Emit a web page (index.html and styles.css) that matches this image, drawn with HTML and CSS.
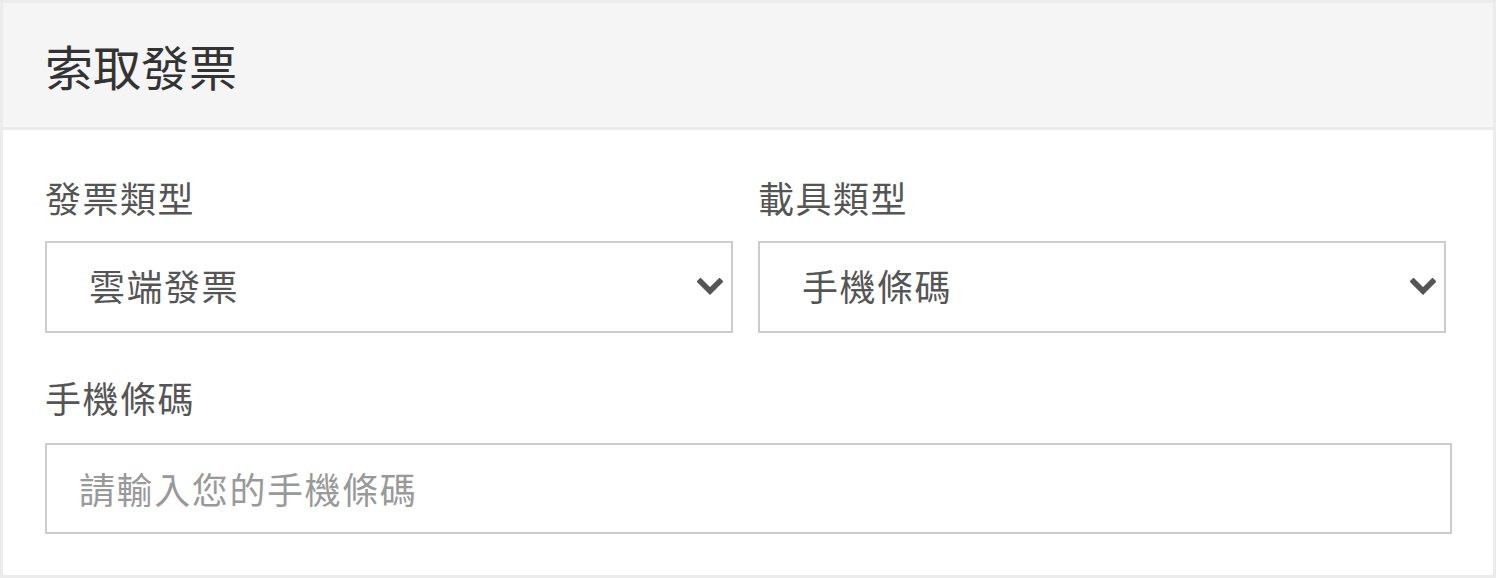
FILE: index.html
```html
<!DOCTYPE html>
<html lang="zh-TW">
<head>
    <meta charset="UTF-8">
    <meta name="viewport" content="width=device-width, initial-scale=1.0">
    <title>索取發票</title>
    <link rel="stylesheet" href="styles.css">
</head>
<body>
    <div class="panel">
        <div class="panel-heading">索取發票</div>

        <div class="panel-body">
            <div class="form-row">
                <div class="form-group">
                    <label class="form-label" for="invoice-type">發票類型</label>
                    <div class="select-wrap">
                        <select id="invoice-type" class="form-select">
                            <option>雲端發票</option>
                            <option>捐贈發票</option>
                            <option>三聯式發票</option>
                        </select>
                        <svg class="select-arrow" width="26" height="18" viewBox="0 0 26 18">
                            <polyline points="3.5,3.5 13,13 22.5,3.5" fill="none" stroke="#555" stroke-width="5.5" stroke-linecap="square" stroke-linejoin="miter"/>
                        </svg>
                    </div>
                </div>
                <div class="form-group">
                    <label class="form-label" for="carrier-type">載具類型</label>
                    <div class="select-wrap">
                        <select id="carrier-type" class="form-select">
                            <option>手機條碼</option>
                            <option>自然人憑證</option>
                        </select>
                        <svg class="select-arrow" width="26" height="18" viewBox="0 0 26 18">
                            <polyline points="3.5,3.5 13,13 22.5,3.5" fill="none" stroke="#555" stroke-width="5.5" stroke-linecap="square" stroke-linejoin="miter"/>
                        </svg>
                    </div>
                </div>
            </div>

            <div class="form-group form-group-last">
                <label class="form-label" for="mobile-code">手機條碼</label>
                <input type="text" id="mobile-code" class="form-input" placeholder="請輸入您的手機條碼">
            </div>
        </div>
    </div>
</body>
</html>
```

FILE: styles.css
```css
body {
    margin: 0;
    font-family: "Noto Sans CJK TC", "Liberation Sans", sans-serif;
    background-color: #fff;
    color: #333;
}

.panel {
    border: 3px solid #ececec;
    background-color: #fff;
}

.panel-heading {
    height: 124px;
    display: flex;
    align-items: center;
    padding: 0 42px;
    background-color: #f5f5f5;
    border-bottom: 3px solid #ececec;
    font-size: 48px;
    color: #333;
}

.panel-body {
    padding: 42px 41px 41px 42px;
}

.form-row {
    display: grid;
    grid-template-columns: 688px 688px;
    gap: 25px;
    margin-bottom: 39px;
}

.form-label {
    display: block;
    height: 50px;
    line-height: 50px;
    font-size: 36px;
    letter-spacing: 1.5px;
    color: #555;
    margin-bottom: 19px;
}

.form-group-last .form-label {
    margin-bottom: 21px;
}

.select-wrap {
    position: relative;
}

.form-select {
    display: block;
    width: 100%;
    height: 92px;
    margin: 0;
    padding: 0 60px 4px 42px;
    border: 2px solid #ccc;
    border-radius: 0;
    background-color: #fff;
    font-family: inherit;
    font-size: 36px;
    letter-spacing: 1.5px;
    color: #555;
    -webkit-appearance: none;
    appearance: none;
    box-sizing: border-box;
    outline: none;
}

.select-arrow {
    position: absolute;
    right: 10px;
    top: 37px;
    pointer-events: none;
}

.form-input {
    display: block;
    width: 100%;
    height: 91px;
    margin: 0;
    padding: 0 30px 2px 32px;
    border: 2px solid #ccc;
    border-radius: 0;
    font-family: inherit;
    font-size: 36px;
    letter-spacing: 1.6px;
    color: #555;
    box-sizing: border-box;
    outline: none;
}

.form-input::placeholder {
    color: #999;
}
```
